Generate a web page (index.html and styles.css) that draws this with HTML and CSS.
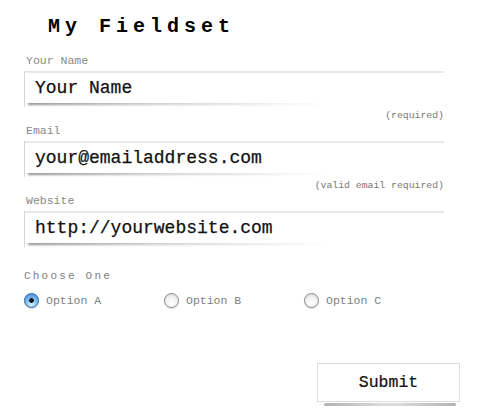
FILE: index.html
```html
<!DOCTYPE html>
<html>
<head>
<meta charset="utf-8">
<link rel="stylesheet" href="styles.css">
</head>
<body>
<form class="form">
  <h1 class="title">My Fieldset</h1>
  <div class="field">
    <label class="label" for="name">Your Name</label>
    <div class="input-wrap"><input class="input" id="name" type="text" value="Your Name"></div>
    <div class="note">(required)</div>
  </div>
  <div class="field">
    <label class="label" for="email">Email</label>
    <div class="input-wrap"><input class="input" id="email" type="text" value="your@emailaddress.com"></div>
    <div class="note">(valid email required)</div>
  </div>
  <div class="field field-last">
    <label class="label" for="web">Website</label>
    <div class="input-wrap"><input class="input" id="web" type="text" value="http://yourwebsite.com"></div>
  </div>
  <div class="choose">Choose One</div>
  <div class="radios">
    <label class="option"><input class="radio" type="radio" name="opt" checked><span>Option A</span></label>
    <label class="option"><input class="radio" type="radio" name="opt"><span>Option B</span></label>
    <label class="option"><input class="radio" type="radio" name="opt"><span>Option C</span></label>
  </div>
  <div class="actions">
    <div class="submit-wrap"><button class="submit" type="button">Submit</button></div>
  </div>
</form>
</body>
</html>
```
FILE: styles.css
```css
html, body {
  margin: 0;
  padding: 0;
  background: #fff;
}
body {
  font-family: "Liberation Mono", "Courier New", monospace;
}
.form {
  width: 420px;
  margin-left: 24px;
  padding-top: 15px;
}
.title {
  margin: 0 0 15px 24px;
  font-size: 20px;
  line-height: 24px;
  font-weight: bold;
  letter-spacing: 5px;
  color: #000;
}
.field {
  display: flex;
  flex-direction: column;
}
.label {
  display: block;
  font-size: 11.5px;
  line-height: 14px;
  color: #888;
  margin: 0 0 3px 2px;
}
.input-wrap {
  position: relative;
  height: 36px;
  border-left: 1px solid #d6d6d6;
}
.input-wrap::after {
  content: "";
  position: absolute;
  left: 3px;
  top: 31px;
  width: 300px;
  height: 3px;
  background: linear-gradient(to right, rgba(0,0,0,0.45), rgba(0,0,0,0.2) 45%, rgba(0,0,0,0));
  filter: blur(1.2px);
}
.input {
  position: relative;
  z-index: 1;
  display: block;
  box-sizing: border-box;
  width: 100%;
  height: 32px;
  margin: 0;
  padding: 0 0 0 10px;
  border: 0;
  border-top: 2px solid #e8e8e8;
  background: #fff;
  font-family: "Liberation Mono", "Courier New", monospace;
  font-size: 18px;
  color: #111;
  -webkit-text-stroke: 0.25px #111;
  outline: none;
}
.note {
  text-align: right;
  font-size: 9.8px;
  line-height: 12px;
  color: #777;
  margin: 3px 0 2px;
}
.field-last .input-wrap {
  margin-bottom: 22px;
}
.choose {
  font-size: 11px;
  line-height: 14px;
  letter-spacing: 2.2px;
  color: #808080;
  margin-bottom: 9px;
}
.radios {
  display: flex;
  height: 16px;
}
.option {
  display: flex;
  align-items: center;
  gap: 7px;
  width: 140px;
  font-size: 11.5px;
  color: #808080;
}
.radio {
  appearance: none;
  -webkit-appearance: none;
  box-sizing: border-box;
  width: 15px;
  height: 15px;
  margin: 0;
  border-radius: 50%;
  border: 1px solid #8a8a8a;
  background: radial-gradient(circle at 50% 70%, #ffffff 0%, #f2f2f2 50%, #d4d4d4 100%);
  box-shadow: 0 1px 1px rgba(0,0,0,0.15);
}
.radio:checked {
  border-color: #2f64a8;
  background:
    radial-gradient(circle at 50% 50%, #111 0, #111 2px, rgba(0,0,0,0) 2.6px),
    radial-gradient(circle at 50% 80%, #dff2ff 0%, #86c4f2 40%, #3a84d4 100%);
}
.actions {
  display: flex;
  justify-content: flex-end;
  margin: 55px -16px 0 0;
}
.submit-wrap {
  display: flex;
  flex-direction: column;
  align-items: stretch;
}
.submit-wrap::after {
  content: "";
  display: block;
  height: 3px;
  margin: 1px 4px 0 7px;
  border-radius: 2px;
  background: linear-gradient(to right, rgba(0,0,0,0.3), rgba(0,0,0,0.14) 45%, rgba(0,0,0,0.14) 55%, rgba(0,0,0,0.3));
}
.submit {
  display: block;
  box-sizing: border-box;
  width: 143px;
  height: 39px;
  border: 1px solid #dcdcdc;
  background: #fff;
  font-family: "Liberation Mono", "Courier New", monospace;
  font-size: 16.5px;
  color: #111;
  -webkit-text-stroke: 0.2px #111;
  cursor: pointer;
}
```
